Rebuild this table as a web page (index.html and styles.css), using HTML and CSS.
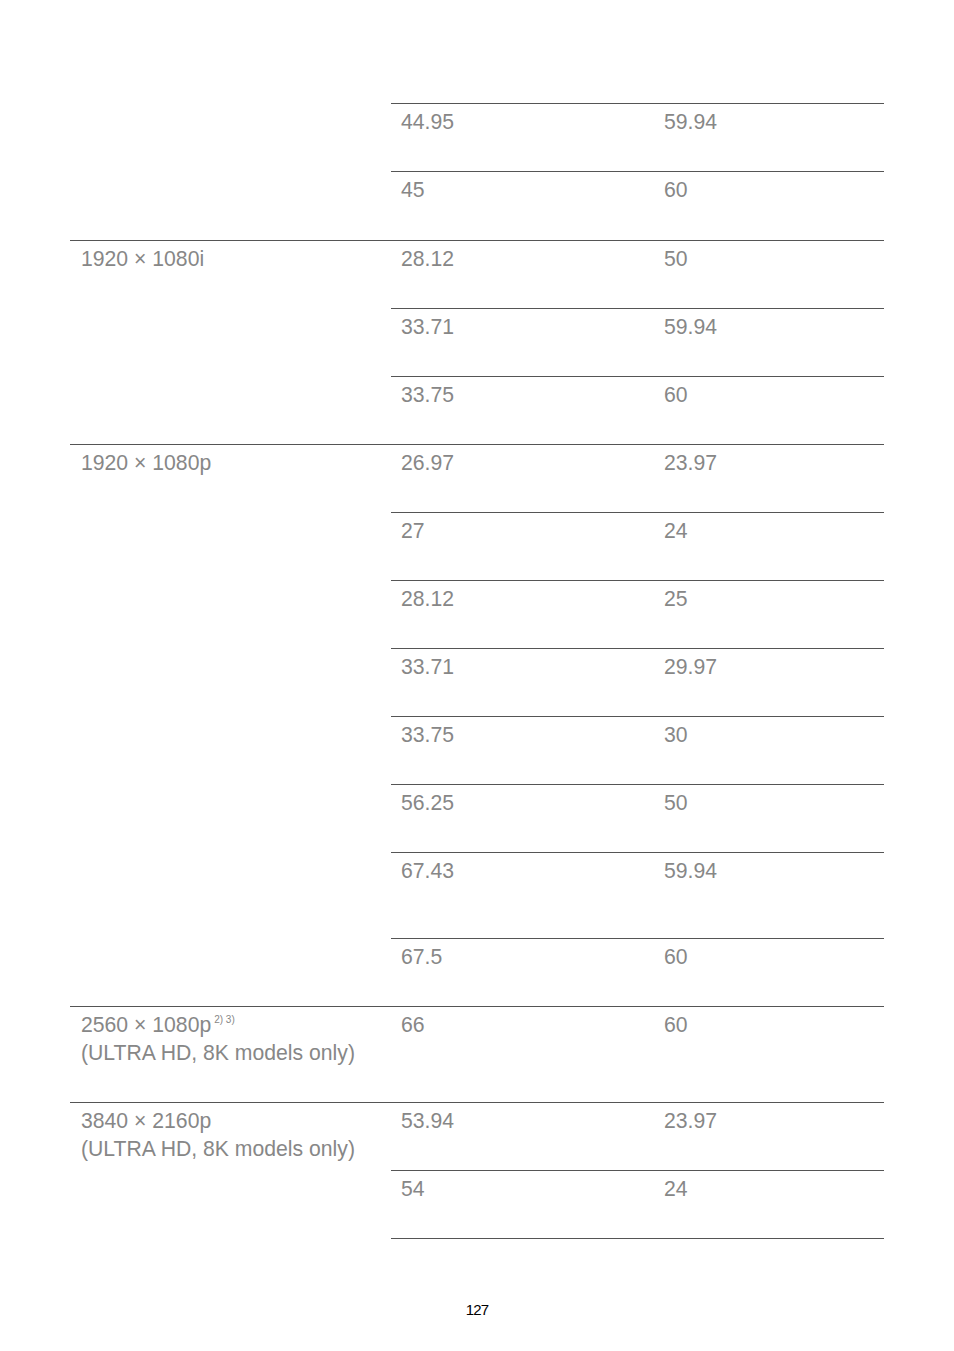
FILE: index.html
```html
<!DOCTYPE html>
<html lang="en">
<head>
<meta charset="utf-8">
<title>Page 127</title>
<link rel="stylesheet" href="styles.css">
</head>
<body>
<div class="page">
  <div class="table">
    <div class="group">
      <div class="label blank"></div>
      <div class="rows">
        <div class="row"><div class="c2">44.95</div><div class="c3">59.94</div></div>
        <div class="row r69"><div class="c2">45</div><div class="c3">60</div></div>
      </div>
    </div>
    <div class="group">
      <div class="label">1920 × 1080i</div>
      <div class="rows">
        <div class="row"><div class="c2">28.12</div><div class="c3">50</div></div>
        <div class="row"><div class="c2">33.71</div><div class="c3">59.94</div></div>
        <div class="row"><div class="c2">33.75</div><div class="c3">60</div></div>
      </div>
    </div>
    <div class="group">
      <div class="label">1920 × 1080p</div>
      <div class="rows">
        <div class="row"><div class="c2">26.97</div><div class="c3">23.97</div></div>
        <div class="row"><div class="c2">27</div><div class="c3">24</div></div>
        <div class="row"><div class="c2">28.12</div><div class="c3">25</div></div>
        <div class="row"><div class="c2">33.71</div><div class="c3">29.97</div></div>
        <div class="row"><div class="c2">33.75</div><div class="c3">30</div></div>
        <div class="row"><div class="c2">56.25</div><div class="c3">50</div></div>
        <div class="row r86"><div class="c2">67.43</div><div class="c3">59.94</div></div>
        <div class="row"><div class="c2">67.5</div><div class="c3">60</div></div>
      </div>
    </div>
    <div class="group">
      <div class="label">2560 × 1080p<sup class="note">2) 3)</sup><br>(ULTRA HD, 8K models only)</div>
      <div class="rows">
        <div class="row r96"><div class="c2">66</div><div class="c3">60</div></div>
      </div>
    </div>
    <div class="group last">
      <div class="label">3840 × 2160p<br>(ULTRA HD, 8K models only)</div>
      <div class="rows">
        <div class="row"><div class="c2">53.94</div><div class="c3">23.97</div></div>
        <div class="row"><div class="c2">54</div><div class="c3">24</div></div>
      </div>
    </div>
  </div>
  <div class="pagenum">127</div>
</div>
</body>
</html>
```

FILE: styles.css
```css
html, body {
  margin: 0;
  padding: 0;
  background: #ffffff;
}

.page {
  padding: 103px 70px 0 70px;
  font-family: "Liberation Sans", Arial, sans-serif;
  font-size: 21.2px;
  line-height: 28px;
  color: #878787;
}

.table {
  width: 814px;
}

.group {
  display: flex;
}

.label {
  width: 321px;
  flex: none;
  box-sizing: border-box;
  border-top: 1px solid #555555;
  padding: 4px 10px 0 11px;
}

.label.blank {
  border-top-color: transparent;
}

.rows {
  flex: 1;
  display: flex;
  flex-direction: column;
}

.group.last .rows {
  border-bottom: 1px solid #555555;
}

.row {
  display: flex;
  box-sizing: border-box;
  height: 68px;
  border-top: 1px solid #555555;
  padding-top: 4px;
}

.row.r69 { height: 69px; }
.row.r86 { height: 86px; }
.row.r96 { height: 96px; }

.c2 {
  width: 263px;
  flex: none;
  box-sizing: border-box;
  padding-left: 10px;
}

.c3 {
  flex: 1;
  padding-left: 10px;
}

.note {
  font-size: 10px;
  line-height: 0;
  vertical-align: 9px;
  margin-left: 3px;
}

.pagenum {
  margin-top: 62px;
  text-align: center;
  font-size: 15px;
  line-height: 17px;
  letter-spacing: -0.8px;
  color: #000000;
}
```
